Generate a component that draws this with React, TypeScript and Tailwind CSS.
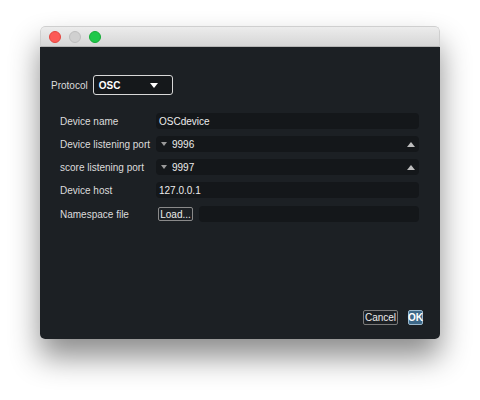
import React from 'react';

const font = { fontFamily: '"Liberation Sans", Arial, sans-serif' };

const Row = ({ label, children }: { label: string; children: React.ReactNode }) => (
  <div className="flex items-center h-[16px]">
    <span className="w-[96px] shrink-0 whitespace-nowrap text-[#dcdcdc]">{label}</span>
    {children}
  </div>
);

const Spin = ({ value }: { value: string }) => (
  <div className="flex-1 h-full flex items-center bg-[#14171a] rounded-sm">
    <span className="ml-[5px] mr-[5px] w-0 h-0 border-l-[3.5px] border-r-[3.5px] border-t-[4px] border-l-transparent border-r-transparent border-t-[#9a9a9a]" />
    <span className="text-[#ececec]">{value}</span>
    <span className="ml-auto mr-[4px] w-0 h-0 border-l-[4px] border-r-[4px] border-b-[5px] border-l-transparent border-r-transparent border-b-[#bdbdbd]" />
  </div>
);

const App = () => {
  return (
    <div className="w-[480px] h-[400px] bg-white flex justify-center pt-[26px] text-[10px]" style={font}>
      <div className="w-[400px] h-[313px] flex flex-col rounded-[5px] overflow-hidden shadow-[0_18px_30px_rgba(0,0,0,0.45)]">
        <div className="h-[21px] shrink-0 flex items-center gap-[8px] pl-[8px] bg-gradient-to-b from-[#ececec] to-[#d6d6d6] border border-b-[#b5b5b5] border-[#cfcfcf] rounded-t-[5px]">
          <span className="w-[12px] h-[12px] rounded-full bg-[#fc5b57] border border-[#e2463f]" />
          <span className="w-[12px] h-[12px] rounded-full bg-[#d0d0d0] border border-[#bdbdbd]" />
          <span className="w-[12px] h-[12px] rounded-full bg-[#1fc84a] border border-[#16ab37]" />
        </div>
        <div className="flex-1 flex flex-col bg-[#1c2024] px-[11px]">
          <div className="flex items-center mt-[28px] h-[20px]">
            <span className="text-[#dcdcdc] mr-[5px]">Protocol</span>
            <div className="w-[80px] h-full flex items-center border border-[#d8d8d8] rounded-[3px] bg-[#15181b] px-[5px]">
              <span className="font-bold text-white">OSC</span>
              <span className="ml-auto mr-[9px] w-0 h-0 border-l-[4px] border-r-[4px] border-t-[5px] border-l-transparent border-r-transparent border-t-white" />
            </div>
          </div>
          <div className="flex flex-col gap-[7px] mt-[18px] ml-[9px] mr-[10px]">
            <Row label="Device name">
              <div className="flex-1 h-full flex items-center bg-[#14171a] rounded-sm pl-[3px] text-[#ececec]">OSCdevice</div>
            </Row>
            <Row label="Device listening port">
              <Spin value="9996" />
            </Row>
            <Row label="score listening port">
              <Spin value="9997" />
            </Row>
            <Row label="Device host">
              <div className="flex-1 h-full flex items-center bg-[#14171a] rounded-sm pl-[3px] text-[#ececec]">127.0.0.1</div>
            </Row>
            <div className="flex items-center h-[16px] mt-[1px]">
              <span className="w-[98px] shrink-0 whitespace-nowrap text-[#dcdcdc]">Namespace file</span>
              <div className="w-[35px] h-[14px] flex items-center justify-center border border-[#8a8a8a] rounded-[2px] text-[#ececec]">Load...</div>
              <div className="flex-1 h-full ml-[6px] bg-[#14171a] rounded-sm" />
            </div>
          </div>
          <div className="mt-auto mb-[14px] flex justify-end gap-[10px] mr-[6px]">
            <div className="w-[35px] h-[15px] flex items-center justify-center border border-[#7a7a7a] rounded-[2px] text-[#ececec]">Cancel</div>
            <div className="w-[15px] h-[15px] flex items-center justify-center border border-[#9bb8cc] rounded-[2px] bg-[#3d6889] text-white font-bold">OK</div>
          </div>
        </div>
      </div>
    </div>
  );
};

export default App;
